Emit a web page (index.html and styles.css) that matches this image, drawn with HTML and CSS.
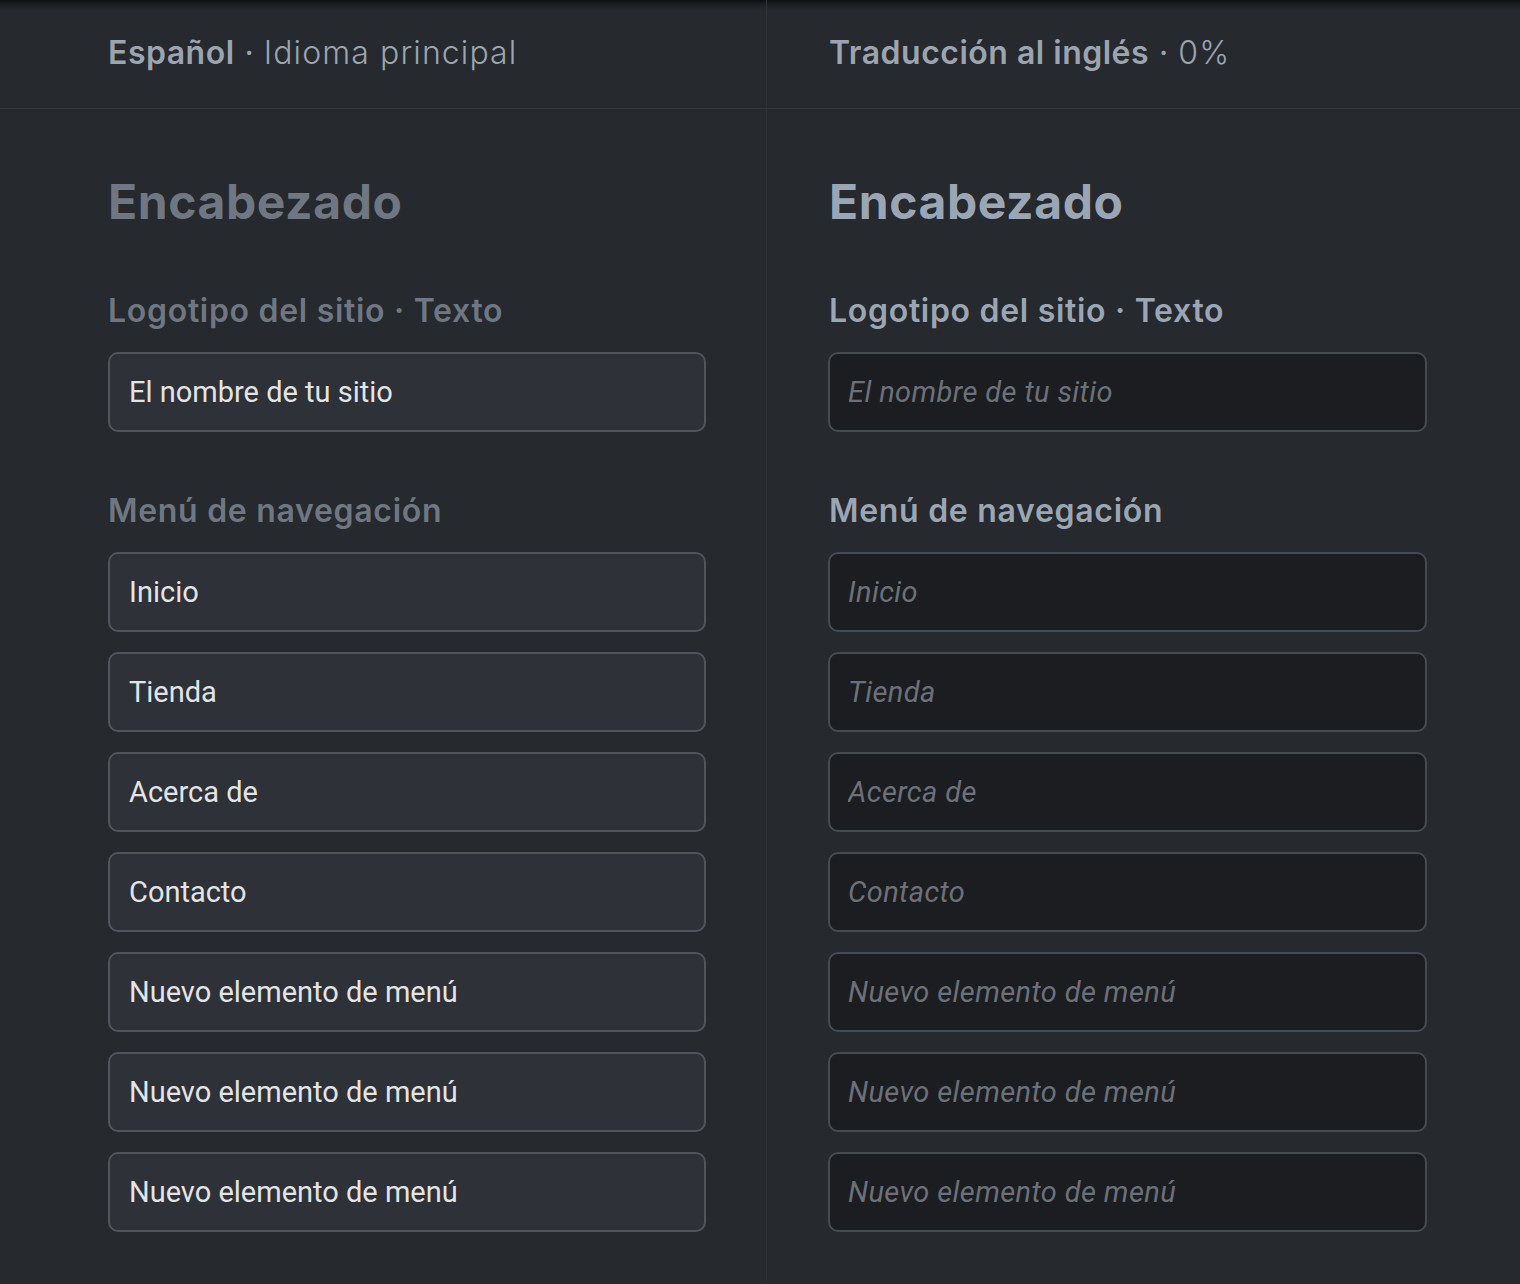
FILE: index.html
```html
<!DOCTYPE html>
<html lang="es">
<head>
    <meta charset="UTF-8">
    <title>Traducción</title>
    <link rel="stylesheet" href="styles.css">
</head>
<body>
    <div class="editor">
        <section class="column source">
            <div class="column-head">
                <strong>Español</strong> <span class="sep">·</span> <span class="thin">Idioma principal</span>
            </div>
            <div class="column-body">
                <h2>Encabezado</h2>

                <label class="field-label">Logotipo del sitio · Texto</label>
                <input type="text" class="field" value="El nombre de tu sitio">

                <label class="field-label second">Menú de navegación</label>
                <div class="field-list">
                    <input type="text" class="field" value="Inicio">
                    <input type="text" class="field" value="Tienda">
                    <input type="text" class="field" value="Acerca de">
                    <input type="text" class="field" value="Contacto">
                    <input type="text" class="field" value="Nuevo elemento de menú">
                    <input type="text" class="field" value="Nuevo elemento de menú">
                    <input type="text" class="field" value="Nuevo elemento de menú">
                </div>
            </div>
        </section>

        <section class="column target">
            <div class="column-head">
                <strong>Traducción al inglés</strong> <span class="sep">·</span> <span class="thin">0%</span>
            </div>
            <div class="column-body">
                <h2>Encabezado</h2>

                <label class="field-label">Logotipo del sitio · Texto</label>
                <input type="text" class="field" placeholder="El nombre de tu sitio">

                <label class="field-label second">Menú de navegación</label>
                <div class="field-list">
                    <input type="text" class="field" placeholder="Inicio">
                    <input type="text" class="field" placeholder="Tienda">
                    <input type="text" class="field" placeholder="Acerca de">
                    <input type="text" class="field" placeholder="Contacto">
                    <input type="text" class="field" placeholder="Nuevo elemento de menú">
                    <input type="text" class="field" placeholder="Nuevo elemento de menú">
                    <input type="text" class="field" placeholder="Nuevo elemento de menú">
                </div>
            </div>
        </section>
    </div>
</body>
</html>
```

FILE: styles.css
```css
html, body {
    margin: 0;
    height: 100%;
}

body {
    background-color: #26292d;
    font-family: Inter, "Noto Sans", sans-serif;
    overflow: hidden;
}

.editor {
    display: grid;
    grid-template-columns: 767px 1fr;
    min-height: 100%;
    background: linear-gradient(to bottom, #0d0e10 0, #1c1e21 4px, #26292d 10px, #26292d 100%);
}

.column.source {
    border-right: 1px solid #2f3237;
}

.column-head {
    height: 109px;
    box-sizing: border-box;
    border-bottom: 1px solid #33363b;
    display: flex;
    align-items: center;
    gap: 10px;
    padding-bottom: 4px;
    font-size: 32px;
    color: #9ba4af;
}

.source .column-head,
.source .column-body {
    padding-left: 108px;
    padding-right: 60px;
}

.target .column-head,
.target .column-body {
    padding-left: 61px;
    padding-right: 93px;
}

.target .column-head {
    padding-left: 62px;
}

.column-head strong {
    font-weight: 600;
    letter-spacing: 0.5px;
}

.column-head .thin {
    font-weight: 300;
    letter-spacing: 1.1px;
}

.column-body {
    padding-top: 65px;
    display: flex;
    flex-direction: column;
}

h2 {
    margin: 0;
    font-size: 48px;
    line-height: 56px;
    font-weight: 700;
    letter-spacing: 0.6px;
}

.target h2 {
    margin-left: 1px;
}

.field-label {
    display: block;
    margin-top: 61px;
    margin-bottom: 21px;
    font-size: 32px;
    line-height: 40px;
    font-weight: 600;
    letter-spacing: 0.7px;
}

.target .field-label {
    margin-left: 1px;
}

.field-label.second {
    margin-top: 59px;
}

.source h2,
.source .field-label {
    color: #6f7782;
}

.target h2,
.target .field-label {
    color: #9ba6b4;
}

.field-list {
    display: flex;
    flex-direction: column;
    gap: 20px;
}

.field {
    display: block;
    width: 100%;
    height: 80px;
    box-sizing: border-box;
    margin: 0;
    padding: 0 19px;
    border-radius: 10px;
    font-family: Roboto, "Noto Sans", sans-serif;
    font-size: 29px;
    outline: none;
}

.source .field {
    background-color: #2e3137;
    border: 2px solid #50555c;
    color: #e3e4e6;
}

.target .field {
    background-color: #1c1d21;
    border: 2px solid #464a51;
    color: #e3e4e6;
    padding-left: 18px;
}

.target .field::placeholder {
    color: #6c7179;
    font-style: italic;
    letter-spacing: 0.4px;
}
```
